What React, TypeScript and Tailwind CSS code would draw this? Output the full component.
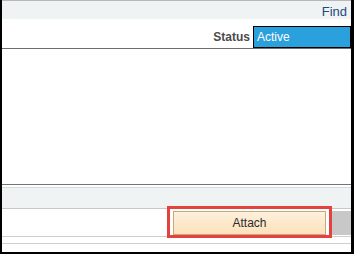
export default function App() {
  return (
    <div className="w-[354px] h-[254px] bg-white overflow-hidden font-['Liberation_Sans',Arial,sans-serif]">
      <div className="relative h-full flex flex-col border-l-2 border-r-[3px] border-b-2 border-black">
        {/* top toolbar */}
        <div className="h-[19px] shrink-0 border-t border-[#b4b8bb] bg-[#eff3f4] flex items-end justify-end pr-[4px]">
          <span className="text-[13px] leading-[15px] text-[#234a7c]">Find</span>
        </div>

        {/* status row */}
        <div className="h-[30px] shrink-0 flex items-start justify-end pt-[7px] border-b border-[#6d6d6d]">
          <span className="text-[12px] leading-[22px] font-bold text-[#4a4a4a] mr-[3px]">Status</span>
          <div className="w-[98px] h-[22px] border border-black bg-[#2aa0dc] pl-[3px] text-[12px] leading-[20px] text-white">
            Active
          </div>
        </div>

        {/* body */}
        <div className="flex-1" />

        {/* footer bar */}
        <div className="h-[25px] shrink-0 border-t border-[#747474] pt-[2px] bg-white">
          <div className="h-full border-t border-[#d6dbde] border-b border-b-[#c8c8c8] bg-[#eff3f4]" />
        </div>

        {/* button row */}
        <div className="h-[28px] shrink-0 flex items-center justify-end border-b border-[#cfcfcf]">
          <button className="w-[153px] h-[24px] border border-[#c3a884] bg-gradient-to-b from-[#fdf0dc] to-[#fde1bb] text-[12px] text-[#2b2b2b] mr-[6px]">
            Attach
          </button>
          <div className="w-[19px] h-[24px] bg-[#c8c8c8]" />
        </div>

        <div className="h-[7px] shrink-0 border-b border-[#cfcfcf]" />
        <div className="flex-none h-[8px]" />

        {/* highlight annotation */}
        <div className="absolute left-[165px] top-[206px] w-[165px] h-[32px] border-[3px] border-[#e6423d]" />
      </div>
    </div>
  );
}
